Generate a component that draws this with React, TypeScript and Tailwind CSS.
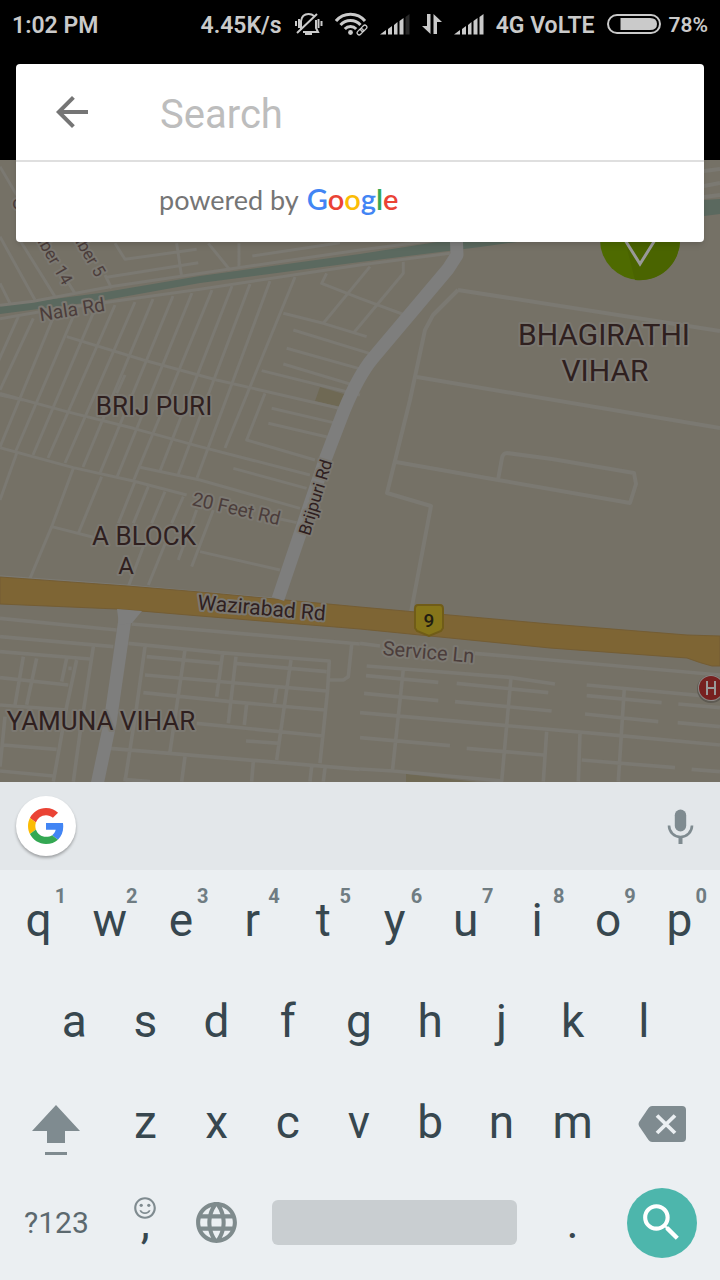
import React from "react";
import {
  MdArrowBack,
  MdLanguage,
  MdOutlineSentimentSatisfiedAlt,
  MdSearch,
} from "react-icons/md";

const NORTH_WEST =
  "M0 20L50 105M50 225L165 410M0 230L105 420M0 370L30 430M190 345L225 400M315 345L335 385" +
  "M345 250L375 298L590 268M320 352L595 308M530 250L545 350M625 250L690 330M717 250L717 325M757 288L1020 248" +
  "M980 340L965 370L1080 415L1215 465M850 460L970 490L1100 530M970 490L1110 320M1060 520L1210 340L1210 305" +
  "M880 510L1140 590M860 565L1110 635M850 612L1060 675M785 632L1080 705" +
  "M200 530L430 600L650 660L780 690L1040 750M55 470L-30 660M100 475L0 690M375 645L350 700M0 705L70 720";

const LANES: [number, number, number, number][] = [
  [53, 318, 0, 447],
  [73, 317, 15, 453],
  [95, 309, 33, 455],
  [115, 305, 48, 458],
  [135, 302, 65, 463],
  [153, 299, 83, 467],
  [173, 296, 100, 473],
  [192, 293, 117, 477],
  [212, 290, 133, 482],
  [232, 286, 160, 471],
  [250, 284, 178, 475],
  [270, 281, 197, 478],
  [295, 277, 225, 448],
];

const MIDDLE_WEST =
  "M0 40L200 95L400 145L600 200L930 285M0 203L220 263L400 303L560 345M830 415L890 428M420 262L600 300L900 385" +
  "M815 85L1000 128M805 130L985 172M795 40L740 180L945 240M700 265L920 325" +
  "M50 220L0 360M220 265L155 440L90 595M305 290L235 460M155 440L280 472M405 305L355 430M445 320L400 430M495 335L455 430M550 350L515 430" +
  "M590 390L535 540M640 390L575 560M600 515L840 570M430 500L385 620M500 480L445 615M0 590L380 618L830 658";

const EAST =
  "M458 290L720 331M458 290L433 315L425 330L410 400L387 493L431 506L411 612M417 377L720 428" +
  "M396 462L498 480L630 503L636 484L634 473L552 459L507 453Q503 453 502 458L498 480" +
  "M704 171L720 169M704 186L720 183M704 197L720 195";

const SOUTH_WEST =
  "M0 115L350 150M0 170L340 200M0 215L270 237M0 293L205 315M0 375L200 390M395 132L1080 192" +
  "M385 190L660 218L988 243L983 330L960 550M1055 195L1045 290L1030 300L990 300M435 200L410 380L375 605" +
  "M555 210L510 515M668 220L650 350M708 230L685 430M873 240L830 540M440 230L660 250M435 285L980 333" +
  "M430 338L690 365L975 390M590 430L970 468M738 483L840 490M830 325L823 370M740 372L733 435M705 250L980 275" +
  "M330 505L1080 568M555 530L545 605M760 545L755 605M935 560L930 605M975 565L970 605M370 598L450 605" +
  "M70 230L45 375M110 235L80 375M200 235L185 305M230 240L200 380L160 605M280 200L240 460L220 605" +
  "M10 495L170 508M0 573L160 588M15 410L0 560M205 265L215 265";

const SOUTH_EAST =
  "M345 220L1080 285M0 190L60 198M20 258L450 292L585 312M18 287L235 307M290 310L565 338M12 340L235 362" +
  "M285 365L575 393M0 398L440 437L780 467L1080 495M0 473L270 497M320 505L550 525M130 268L97 575M453 292L425 605" +
  "M560 455L550 605M660 462L655 605M793 325L775 605M680 315L1080 352M680 347L905 368M675 402L895 425" +
  "M955 372L1080 383M953 428L1080 440M665 540L945 563M995 568L1080 575M0 567L100 573L430 603";

function MapLabel({
  x,
  y,
  size,
  rotate = 0,
  soft = false,
  anchor = "middle",
  children,
}: {
  x: number;
  y: number;
  size: number;
  rotate?: number;
  soft?: boolean;
  anchor?: "start" | "middle" | "end";
  children: string;
}) {
  return (
    <text
      x={x}
      y={y}
      fontSize={size}
      textAnchor={anchor}
      transform={`rotate(${rotate} ${x} ${y})`}
      fill={soft ? "#4b3d3b" : "#2f201f"}
      stroke="#7b7871"
      strokeWidth="4"
      strokeLinejoin="round"
      paintOrder="stroke"
    >
      {children}
    </text>
  );
}

function CityMap() {
  return (
    <svg
      className="h-full w-full font-[Roboto,sans-serif]"
      viewBox="0 160 720 622"
      preserveAspectRatio="xMidYMin slice"
      role="img"
      aria-label="Map of Brij Puri and Yamuna Vihar"
    >
      <rect y="160" width="720" height="700" fill="#757166" />
      <path d="M320 387L347 395L341 407L315 401Z" fill="#6f6954" />
      <path d="M406 774L477 782H406Z" fill="#6f6954" />
      <path d="M0 306L100 293L200 276L360 254L450 240L704 200L720 199V214L704 216L480 247L360 262L200 283L100 301L0 314Z" fill="#5b695f" />
      <g fill="none" stroke="#7b7972" strokeLinejoin="round">
        <g transform="translate(0 160) scale(.3333)" strokeWidth="9">
          <path d={NORTH_WEST} />
          <path d="M0 436L100 424L330 380L750 318L1080 270L1350 235" />
          <path d="M0 476L150 450L300 430L600 388L900 342L1080 315L1350 280" />
        </g>
        <path d={LANES.map(([a, b, c, d]) => `M${a} ${b}L${c} ${d}`).join("")} strokeWidth="3" />
        <path d={MIDDLE_WEST} transform="translate(0 380) scale(.3333)" strokeWidth="9" />
        <path d={EAST} strokeWidth="4" />
        <path d={SOUTH_WEST} transform="translate(0 580) scale(.3333)" strokeWidth="11" />
        <path d={SOUTH_EAST} transform="translate(360 580) scale(.3333)" strokeWidth="11" />
      </g>
      <path
        d="M0 577L127 586L200 592L360 607L550 624L687 635L720 636V666H712Q700 663 687 658L550 648L360 629L200 616L117 609L0 604Z"
        fill="#7e6534"
        stroke="#745d34"
      />
      <g fill="none" stroke="#7e7e7d" strokeWidth="13" strokeLinejoin="round">
        <path d="M456 230L457 255L448 269L373 358Q358 376 343 413L325 460L278 599" />
        <path d="M126 612L110 723L97 785" />
      </g>
      <path d="M117 609L142 611L132 623L119 625Z" fill="#7e7e7d" />
      <MapLabel x={63} y={286} size={17} rotate={60} soft anchor="end">Number 14</MapLabel>
      <MapLabel x={96} y={278} size={17} rotate={60} soft anchor="end">Number 5</MapLabel>
      <MapLabel x={17} y={209} size={18} soft>c</MapLabel>
      <MapLabel x={73} y={316} size={19} rotate={-9} soft>Nala Rd</MapLabel>
      <MapLabel x={604} y={345} size={30}>BHAGIRATHI</MapLabel>
      <MapLabel x={605} y={381} size={30}>VIHAR</MapLabel>
      <MapLabel x={154} y={415} size={26}>BRIJ PURI</MapLabel>
      <MapLabel x={144} y={545} size={26}>A BLOCK</MapLabel>
      <MapLabel x={126} y={574} size={24}>A</MapLabel>
      <MapLabel x={235} y={515} size={19} rotate={13} soft>20 Feet Rd</MapLabel>
      <MapLabel x={321} y={499} size={17} rotate={-73}>Brijpuri Rd</MapLabel>
      <MapLabel x={261} y={615} size={21} rotate={5}>Wazirabad Rd</MapLabel>
      <MapLabel x={428} y={659} size={20} rotate={5} soft>Service Ln</MapLabel>
      <MapLabel x={101} y={730} size={26}>YAMUNA VIHAR</MapLabel>
      <path d="M418 605H440Q443 605 443 609V628L441 631L429 636L417 631L415 628V609Q415 605 418 605Z" fill="#86751a" stroke="#705c18" strokeWidth="2" />
      <text x="429" y="627" textAnchor="middle" fontSize="19" fontWeight="500" fill="#211d12">9</text>
      <circle cx="711" cy="689" r="14" fill="#5d5a52" />
      <circle cx="711" cy="688" r="13" fill="#8c8886" />
      <circle cx="711" cy="688" r="12" fill="#77201f" />
      <path d="M707 681V695M715 681V695M707 688H715" stroke="#999" strokeWidth="2" />
      <circle cx="640" cy="240" r="40" fill="#4e6a00" />
      <path d="M625 240L635 280A40 40 0 0 0 680 240Z" fill="#4a6400" />
      <path d="M625 240L640 264L655 240" fill="none" stroke="#999" strokeWidth="3" />
    </svg>
  );
}

function SilentIcon() {
  return (
    <svg width="29" height="24" viewBox="0 0 29 24" fill="none" stroke="currentColor" strokeWidth="2" aria-hidden="true">
      <path d="M7 18V9Q8 2 14.500 2Q18 2 20 4M22 8V16L24 20H9M3 21L23 2" />
      <path d="M5 7V16M2 9V14M24.500 7V16M27.500 9V14" strokeWidth="2" />
      <path d="M11 22H18" />
    </svg>
  );
}

function WifiIcon() {
  return (
    <svg width="33" height="24" viewBox="0 0 33 24" fill="none" stroke="currentColor" strokeWidth="3" aria-hidden="true">
      <path d="M1 9A19 19 0 0 1 30 9M5.500 13A13.300 13.300 0 0 1 25.500 13M9.800 17A7.800 7.800 0 0 1 21.200 17" />
      <circle cx="15.500" cy="20.500" r="2.400" fill="currentColor" stroke="none" />
      <g strokeWidth="1.300" transform="rotate(-45 27 18)">
        <rect x="21" y="16" width="7" height="4" rx="2" />
        <rect x="26" y="16" width="7" height="4" rx="2" />
      </g>
    </svg>
  );
}

function SignalIcon({ weak = false }: { weak?: boolean }) {
  return (
    <svg width="30" height="21" viewBox="0 0 30 21" fill="currentColor" aria-hidden="true">
      <path d="M0 20.500L6 16V20.500ZM8 15L12 12V20.500H8ZM14 11L17.500 8V20.500H14ZM19.500 7L23.500 4V20.500H19.500Z" />
      <path d="M25.500 3L29.500 0V20.500H25.500Z" opacity={weak ? 0.2 : 1} />
    </svg>
  );
}

function StatusBar() {
  return (
    <header className="flex h-12 items-center justify-between bg-black px-3 pt-1 text-[23px] font-semibold text-[#cacaca]">
      <time>1:02 PM</time>
      <div className="flex items-center gap-3 whitespace-nowrap">
        <span>4.45K/s</span>
        <div className="flex items-center gap-3 pb-1">
          <SilentIcon />
          <WifiIcon />
          <SignalIcon weak />
          <svg width="20" height="20" viewBox="0 0 20 20" fill="currentColor" aria-hidden="true">
            <path d="M5 0H8.500V20L0 12H5ZM11.500 20V0L20 8H15V20Z" />
          </svg>
          <SignalIcon />
        </div>
        <span>4G VoLTE</span>
        <div className="flex items-center gap-2">
          <svg width="54" height="20" viewBox="0 0 54 20" className="mb-1" aria-hidden="true">
            <rect x="1" y="1" width="52" height="18" rx="9" fill="none" stroke="currentColor" strokeWidth="2" />
            <path d="M13.500 4H43Q50 4 50 10Q50 16 43 16H13.500Z" fill="currentColor" />
          </svg>
          <span className="text-[21px]">78%</span>
        </div>
      </div>
    </header>
  );
}

function SearchCard() {
  return (
    <form className="relative mx-4 mt-4 rounded bg-white shadow-md" role="search">
      <div className="flex h-24 items-center">
        <button type="button" aria-label="Back" className="ml-8 text-[#757575]">
          <MdArrowBack size={48} />
        </button>
        <input
          type="text"
          aria-label="Search"
          placeholder="Search"
          className="ml-16 min-w-0 flex-1 pt-1.5 text-[40px] outline-none placeholder:text-[#bdbdbd]"
        />
      </div>
      <div className="flex h-[82px] items-center border-t-2 border-[#dfdfdf] pb-1.5 pl-[143px] font-[Lato,sans-serif] text-[27px] text-[#757575]">
        <p className="flex items-baseline gap-2">
          powered by
          <span className="text-[29px] font-semibold">
            <span className="text-[#4285f4]">G</span>
            <span className="text-[#ea4335]">o</span>
            <span className="text-[#fbbc05]">o</span>
            <span className="text-[#4285f4]">g</span>
            <span className="text-[#34a853]">l</span>
            <span className="text-[#ea4335]">e</span>
          </span>
        </p>
      </div>
    </form>
  );
}

function GoogleMark() {
  return (
    <svg width="36" height="36" viewBox="0 0 48 48" aria-hidden="true">
      <path fill="#EA4335" d="M24 9.5c3.54 0 6.71 1.22 9.21 3.6l6.85-6.85C35.9 2.38 30.47 0 24 0 14.62 0 6.51 5.38 2.56 13.22l7.98 6.19C12.43 13.72 17.74 9.5 24 9.5z" />
      <path fill="#4285F4" d="M46.98 24.55c0-1.57-.15-3.09-.38-4.55H24v9.02h12.94c-.58 2.96-2.26 5.48-4.78 7.18l7.73 6c4.51-4.18 7.09-10.36 7.09-17.65z" />
      <path fill="#FBBC05" d="M10.53 28.59c-.48-1.45-.76-2.99-.76-4.59s.27-3.14.76-4.59l-7.98-6.19C.92 16.46 0 20.12 0 24c0 3.88.92 7.54 2.56 10.78l7.97-6.19z" />
      <path fill="#34A853" d="M24 48c6.48 0 11.93-2.13 15.89-5.81l-7.73-6c-2.15 1.45-4.92 2.3-8.16 2.3-6.26 0-11.57-4.22-13.47-9.91l-7.98 6.19C6.51 42.62 14.62 48 24 48z" />
    </svg>
  );
}

function LetterKey({ label, hint }: { label: string; hint?: string }) {
  return (
    <button type="button" className="relative col-span-2 h-full text-[46px] text-[#37474f]">
      {label}
      {hint && (
        <span className="absolute top-3.5 right-2 text-[20px] leading-6 font-bold text-[#6f7c82]">{hint}</span>
      )}
    </button>
  );
}

const ROW = "grid h-[101px] grid-cols-20 items-center pr-[5px] pl-[3px]";

function Keyboard() {
  return (
    <section aria-label="Keyboard" className="relative bg-[#ebeff2] pb-2">
      <div className="flex h-[88px] items-center justify-between bg-[#e3e7ea] px-4">
        <button
          type="button"
          aria-label="Google"
          className="flex size-[60px] items-center justify-center rounded-full bg-white shadow-[0_2px_3px_rgba(0,0,0,0.3)]"
        >
          <GoogleMark />
        </button>
        <button type="button" aria-label="Voice input" className="mr-2.5 text-[#7f8b90]">
          <svg width="27" height="36" viewBox="0 0 27 36" fill="none" stroke="currentColor" strokeWidth="2.600">
            <rect x="7.800" y="1.500" width="11.400" height="22" rx="5.700" fill="currentColor" stroke="none" />
            <path d="M2 17.500A11.500 11.500 0 0 0 25 17.500" />
            <path d="M13.500 29V36" strokeWidth="4" />
          </svg>
        </button>
      </div>
      <div className={ROW}>
        {"qwertyuiop".split("").map((c, i) => (
          <LetterKey key={c} label={c} hint={String((i + 1) % 10)} />
        ))}
      </div>
      <div className={ROW}>
        <span />
        {"asdfghjkl".split("").map((c) => (
          <LetterKey key={c} label={c} />
        ))}
      </div>
      <div className={ROW}>
        <button type="button" aria-label="Shift" className="col-span-3 flex h-full items-center justify-center pt-4 text-[#7f8b90]">
          <svg width="48" height="51" viewBox="0 0 48 51" fill="currentColor">
            <path d="M24 0L48 26H33V38H15V26H0ZM13 47H35V50H13Z" />
          </svg>
        </button>
        {"zxcvbnm".split("").map((c) => (
          <LetterKey key={c} label={c} />
        ))}
        <button type="button" aria-label="Delete" className="col-span-3 flex h-full items-center justify-center pt-0.5 text-[#7f8b90]">
          <svg width="48" height="36" viewBox="0 0 48 36">
            <path d="M14 0H44Q48 0 48 4V32Q48 36 44 36H14Q12 36 10.500 34L1 20Q0 18 1 16L10.500 2Q12 0 14 0Z" fill="currentColor" />
            <path d="M19 9.500L37 27M37 9.500L19 27" stroke="#ebeff2" strokeWidth="3.800" />
          </svg>
        </button>
      </div>
      <div className="grid h-[99px] grid-cols-20 items-center pr-[5px] pl-[3px]">
        <button type="button" className="col-span-3 h-full text-[30px] text-[#5c696f]">?123</button>
        <button type="button" aria-label="Comma" className="relative col-span-2 h-full text-[46px] text-[#37474f]">
          ,
          <span className="absolute inset-x-0 top-[22px] flex justify-center text-[#7f8b90]">
            <MdOutlineSentimentSatisfiedAlt size={26} />
          </span>
        </button>
        <button type="button" aria-label="Change language" className="col-span-2 flex h-full items-center justify-center text-[#7f8b8d]">
          <MdLanguage size={49} />
        </button>
        <button type="button" aria-label="Space" className="col-span-8 mx-5 h-[45px] rounded-md bg-[#c9ced1]" />
        <LetterKey label="." />
        <div className="col-span-3 flex justify-center">
          <button
            type="button"
            aria-label="Search"
            className="flex size-[70px] items-center justify-center rounded-full bg-[#4db6ac] text-white"
          >
            <MdSearch size={49} />
          </button>
        </div>
      </div>
    </section>
  );
}

export default function App() {
  return (
    <div className="flex min-h-screen flex-col bg-black font-[Roboto,sans-serif]">
      <StatusBar />
      <main className="relative flex-1">
        <div className="absolute inset-x-0 top-28 bottom-0 overflow-hidden">
          <CityMap />
        </div>
        <SearchCard />
      </main>
      <Keyboard />
    </div>
  );
}
